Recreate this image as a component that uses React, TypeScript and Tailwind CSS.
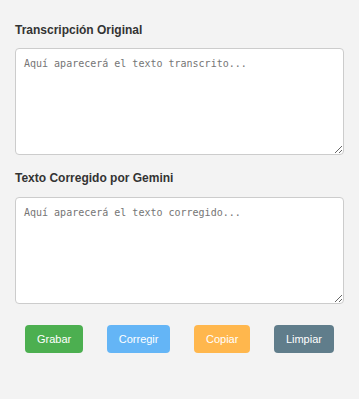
import React, { useState } from 'react';

const buttons = [
  { label: 'Grabar', color: 'bg-[#4caf50]' },
  { label: 'Corregir', color: 'bg-[#64b5f6]' },
  { label: 'Copiar', color: 'bg-[#ffb74d]' },
  { label: 'Limpiar', color: 'bg-[#607d8b]' },
];

const App: React.FC = () => {
  const [original, setOriginal] = useState('');
  const [corrected, setCorrected] = useState('');

  return (
    <div className="min-h-screen bg-[#f3f3f3] px-[15px] pt-[23px] font-['Liberation_Sans',Arial,sans-serif] text-[#333]">
      <label className="block text-[12px] font-bold leading-[14px]">Transcripción Original</label>
      <textarea
        value={original}
        onChange={e => setOriginal(e.target.value)}
        placeholder="Aquí aparecerá el texto transcrito..."
        className="mt-[11px] block h-[107px] w-full rounded-[4px] border border-[#cccccc] bg-white p-2 font-['DejaVu_Sans_Mono',monospace] text-[10px] leading-[14px] placeholder:text-[#757575]"
      />

      <label className="mt-[16px] block text-[12px] font-bold leading-[14px]">Texto Corregido por Gemini</label>
      <textarea
        value={corrected}
        onChange={e => setCorrected(e.target.value)}
        placeholder="Aquí aparecerá el texto corregido..."
        className="mt-[12px] block h-[107px] w-full rounded-[4px] border border-[#cccccc] bg-white p-2 font-['DejaVu_Sans_Mono',monospace] text-[10px] leading-[14px] placeholder:text-[#757575]"
      />

      <div className="mt-[21px] flex justify-between px-[10px]">
        {buttons.map(b => (
          <button
            key={b.label}
            className={`${b.color} h-[28px] rounded-[4px] px-3 text-[11px] text-white`}
          >
            {b.label}
          </button>
        ))}
      </div>
    </div>
  );
};

export default App;
